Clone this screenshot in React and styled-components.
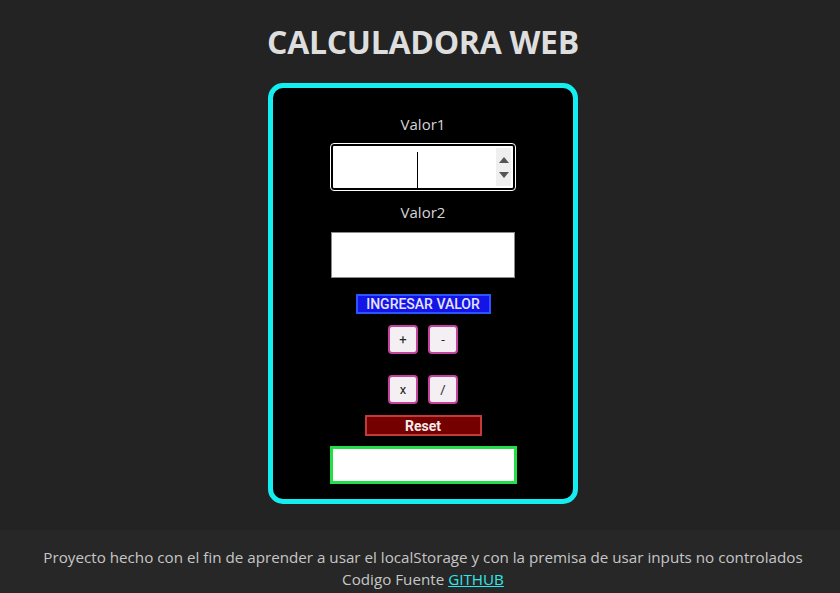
import React from "react";
import styled, { createGlobalStyle } from "styled-components";

const Global = createGlobalStyle`
  html, body { margin: 0; padding: 0; background: #232323; }
  body { font-family: "Open Sans", "Noto Sans", sans-serif; }
  #root { min-height: 593px; }
`;

const Page = styled.div`
  min-height: 593px;
  display: flex;
  flex-direction: column;
  background: #232323;
`;

const Main = styled.main`
  flex: 1;
  display: flex;
  flex-direction: column;
  align-items: center;
  padding-left: 6px;
  padding-top: 21px;
`;

const Title = styled.h1`
  margin: 0 0 20px;
  font-family: "Open Sans", sans-serif;
  font-weight: 700;
  font-size: 32px;
  line-height: 42px;
  color: #dedede;
  letter-spacing: -0.3px;
`;

const Card = styled.section`
  width: 300px;
  box-sizing: content-box;
  border: 5px solid #15eef0;
  border-radius: 15px;
  background: #000;
  padding: 25px 0 15px;
  display: flex;
  flex-direction: column;
  align-items: center;
`;

const Label = styled.label`
  font-size: 15px;
  line-height: 22px;
  color: #d6d6d6;
  margin-bottom: 9px;
`;

const Field = styled.div`
  position: relative;
  width: 184px;
  height: 46px;
  margin-bottom: 11px;
  box-sizing: border-box;
  background: #fff;
  border: ${(p) => (p.$focused ? "2px solid #000" : "1px solid #8a8a8a")};
  outline: ${(p) => (p.$focused ? "1px solid #fff" : "none")};
  border-radius: ${(p) => (p.$focused ? "3px" : "0")};
`;

const Input = styled.input`
  width: 100%;
  height: 100%;
  box-sizing: border-box;
  border: none;
  outline: none;
  background: transparent;
  text-align: center;
  font-size: 16px;
  padding: 0;
  -moz-appearance: textfield;
  &::-webkit-outer-spin-button,
  &::-webkit-inner-spin-button { -webkit-appearance: none; margin: 0; }
`;

const Caret = styled.span`
  position: absolute;
  left: 84px;
  top: 6px;
  width: 1px;
  height: 36px;
  background: #000;
`;

const Spinner = styled.div`
  position: absolute;
  right: 2px;
  top: 2px;
  bottom: 2px;
  width: 15px;
  background: #efefef;
  display: flex;
  flex-direction: column;
  justify-content: space-around;
  align-items: center;
  padding: 3px 0;
  box-sizing: border-box;
`;

const BlueButton = styled.button`
  margin-top: 5px;
  width: 135px;
  height: 20px;
  padding: 0;
  background: #1414e6;
  border: 2px solid #2a55ff;
  color: #e4e4ff;
  font-family: Roboto, "Liberation Sans", Arial, sans-serif;
  font-weight: 500;
  font-size: 14px;
  line-height: 16px;
`;

const OpRow = styled.div`
  display: flex;
  gap: 10px;
  margin-top: ${(p) => p.$top}px;
`;

const OpButton = styled.button`
  width: 30px;
  height: 29px;
  padding: 0;
  box-sizing: border-box;
  background: #f3eff3;
  border: 2px solid #c2449c;
  border-radius: 4px;
  color: #222;
  font-family: Roboto, "Liberation Sans", Arial, sans-serif;
  font-size: 13px;
`;

const ResetButton = styled.button`
  margin-top: 11px;
  width: 117px;
  height: 21px;
  padding: 0;
  background: #750000;
  border: 2px solid #c23a3a;
  color: #f4eaea;
  font-family: Roboto, "Liberation Sans", Arial, sans-serif;
  font-weight: 700;
  font-size: 14px;
`;

const Result = styled.div`
  margin-top: 10px;
  width: 187px;
  height: 38px;
  box-sizing: border-box;
  background: #fff;
  border: 3px solid #25dd48;
`;

const Footer = styled.footer`
  background: #272727;
  padding: 16px 0 3px 6px;
  text-align: center;
  color: #c6c6c6;
  font-size: 15.2px;
  line-height: 22px;
  margin-top: 25px;
`;

const Link = styled.a`
  color: #2fe6ea;
  text-decoration: underline;
`;

const Tri = ({ up }) => (
  <svg width="10" height="7" viewBox="0 0 10 7">
    <path d={up ? "M0 7 L5 1 L10 7 Z" : "M0 0 L5 6 L10 0 Z"} fill="#555" />
  </svg>
);

export default function App() {
  return (
    <Page>
      <Global />
      <Main>
        <Title>CALCULADORA WEB</Title>
        <Card>
          <Label>Valor1</Label>
          <Field $focused>
            <Input type="number" />
            <Caret />
            <Spinner>
              <Tri up />
              <Tri />
            </Spinner>
          </Field>
          <Label>Valor2</Label>
          <Field>
            <Input type="number" />
          </Field>
          <BlueButton>INGRESAR VALOR</BlueButton>
          <OpRow $top={11}>
            <OpButton>+</OpButton>
            <OpButton>-</OpButton>
          </OpRow>
          <OpRow $top={21}>
            <OpButton>x</OpButton>
            <OpButton>/</OpButton>
          </OpRow>
          <ResetButton>Reset</ResetButton>
          <Result />
        </Card>
      </Main>
      <Footer>
        <div>Proyecto hecho con el fin de aprender a usar el localStorage y con la premisa de usar inputs no controlados</div>
        <div>
          Codigo Fuente <Link href="#">GITHUB</Link>
        </div>
      </Footer>
    </Page>
  );
}
